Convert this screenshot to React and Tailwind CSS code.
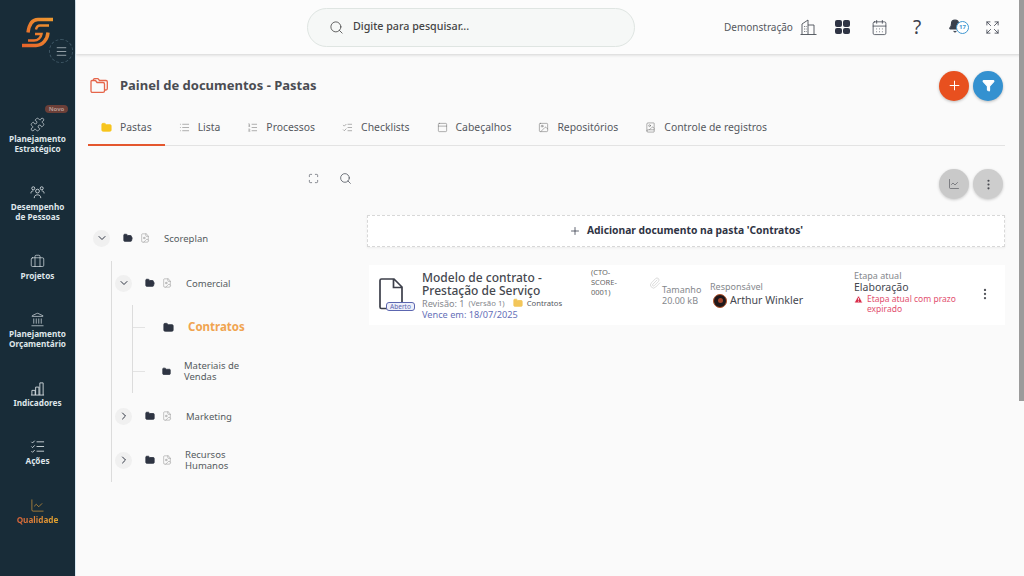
import {
  BookImage,
  Briefcase,
  ChartLine,
  ChevronDown,
  ChevronRight,
  EllipsisVertical,
  Expand,
  FileImage,
  Filter,
  Folder,
  FolderOpen,
  Image,
  Landmark,
  List,
  ListChecks,
  ListOrdered,
  Maximize,
  Menu,
  PanelTop,
  Paperclip,
  Plus,
  Puzzle,
  Search,
  TriangleAlert,
  CalendarDays,
  Bell,
} from "lucide-react";

function PeopleIcon({ size = 15 }) {
  return (
    <svg width={size} height={size} viewBox="0 0 16 16" fill="none" stroke="currentColor" strokeWidth="0.900">
      <circle cx="8" cy="6.500" r="2" />
      <path d="M4.500 14C4.500 11.500 6 10.500 8 10.500S11.500 11.500 11.500 14" />
      <circle cx="3.500" cy="3.500" r="1.600" />
      <circle cx="12.500" cy="3.500" r="1.600" />
      <path d="M1 9C1 7 2 6.300 3.500 6.300M15 9C15 7 14 6.300 12.500 6.300" />
    </svg>
  );
}

function BarsIcon({ size = 15 }) {
  return (
    <svg width={size} height={size} viewBox="0 0 16 16" fill="none" stroke="currentColor" strokeWidth="0.900">
      <path d="M1 15H15M2 15V10H5.500V15M6 15V6.500H9.500V15M10.500 15V2H14V15" />
    </svg>
  );
}

function ActionsIcon({ size = 15 }) {
  return (
    <svg width={size} height={size} viewBox="0 0 16 16" fill="none" stroke="currentColor" strokeWidth="0.900">
      <path d="M7 3H15M7 8H15M7 13H15M1.500 3L2.700 4.200L5 1.800M1.500 8L2.700 9.200L5 6.800M1.500 13L2.700 14.200L5 11.800" />
    </svg>
  );
}

const sideItems = [
  { icon: Puzzle, label: ["Planejamento", "Estratégico"], badge: true },
  { icon: PeopleIcon, label: ["Desempenho", "de Pessoas"] },
  { icon: Briefcase, label: ["Projetos"] },
  { icon: Landmark, label: ["Planejamento", "Orçamentário"] },
  { icon: BarsIcon, label: ["Indicadores"] },
  { icon: ActionsIcon, label: ["Ações"] },
  { icon: ChartLine, label: ["Qualidade"], active: true },
];

const tabs = [
  { label: "Pastas", icon: Folder, active: true },
  { label: "Lista", icon: List },
  { label: "Processos", icon: ListOrdered },
  { label: "Checklists", icon: ListChecks },
  { label: "Cabeçalhos", icon: PanelTop },
  { label: "Repositórios", icon: Image },
  { label: "Controle de registros", icon: BookImage },
];

function Logo() {
  return (
    <svg width="34" height="32" viewBox="0 0 34 32" fill="none">
      <defs>
        <linearGradient id="logo" x1="2" y1="30" x2="33" y2="3" gradientUnits="userSpaceOnUse">
          <stop offset="0" stopColor="#e8622a" />
          <stop offset="1" stopColor="#ee9a30" />
        </linearGradient>
      </defs>
      <g stroke="url(#logo)">
        <path d="M33 3.500H18C12 3.500 9 9 8 16.500" strokeWidth="3.400" />
        <path d="M29 9.500H20C17.500 9.500 16.500 11 16 13.500" strokeWidth="2.400" />
        <path d="M28 16.500C27.500 23 23 29.500 16 29.500H2" strokeWidth="3.400" />
        <path d="M15 18H21.500C21 21.500 18 24.500 14 24.500H8" strokeWidth="2.400" />
      </g>
    </svg>
  );
}

function SideItem({ item }) {
  const Icon = item.icon;
  return (
    <div className={`relative flex flex-col items-center ${item.active ? "text-[#d99a3a]" : "text-[#dfe6ea]"}`}>
      {item.badge && (
        <span className="absolute top-[-12px] left-[45px] h-[8px] w-[23px] rounded-full bg-[#6b3f38] text-center text-[6px] leading-[8px] font-bold text-[#b09a94]">
          Novo
        </span>
      )}
      <Icon size={15} strokeWidth={1.100} />
      <div className="mt-[2px] text-center text-[8.200px] leading-[9.500px] font-bold">
        {item.label.map((l) => (
          <div key={l} className={item.active ? "bg-gradient-to-r from-[#d8633a] to-[#e2a62e] bg-clip-text text-transparent" : ""}>
            {l}
          </div>
        ))}
      </div>
    </div>
  );
}

function Sidebar() {
  return (
    <aside className="relative flex h-full w-[76px] shrink-0 flex-col border-r border-[#d8e8f2] bg-[#182c38]">
      <div className="ml-[20px] mt-[16px] h-[32px]">
        <Logo />
      </div>
      <div className="absolute top-[39px] left-[49px] flex h-[24px] w-[24px] items-center justify-center rounded-full border border-dashed border-[#3d5563] text-[#d5dde1]">
        <Menu size={13} strokeWidth={1.200} />
      </div>
      <div className="mt-[69px] flex flex-col gap-[32.300px]">
        {sideItems.map((item) => (
          <SideItem key={item.label.join(" ")} item={item} />
        ))}
      </div>
    </aside>
  );
}

function BuildingIcon() {
  return (
    <svg width="17" height="16" viewBox="0 0 17 16" fill="none" stroke="#4a4f57" strokeWidth="0.900">
      <path d="M0.500 15.500H16.500M2 15.500V5L8 1V15.500M8 6H14V15.500M4 7.500H4.800M5.800 7.500H6.500M4 10H4.800M5.800 10H6.500M4 12.500H4.800M5.800 12.500H6.500" />
    </svg>
  );
}

function GridIcon() {
  return (
    <div className="grid h-[14px] w-[15px] grid-cols-2 gap-[1px]">
      <span className="rounded-[2px] bg-[#2f3444]" />
      <span className="rounded-[2px] bg-[#2f3444]" />
      <span className="rounded-[2px] bg-[#2f3444]" />
      <span className="rounded-[2px] bg-[#2f3444]" />
    </div>
  );
}

function FoldersIcon() {
  return (
    <svg width="18" height="15" viewBox="0 0 18 15" fill="none" stroke="#e5654a" strokeWidth="1.300" strokeLinejoin="round">
      <path d="M1 3.500C1 2.800 1.500 2.500 2 2.500H5.500L7 4.500H13C14 4.500 14.500 5 14.500 6V13C14.500 13.800 14 14.300 13 14.300H2.500C1.500 14.300 1 13.800 1 13Z" />
      <path d="M3.500 2.500V1.700C3.500 1 4 0.700 4.500 0.700H8L9.500 2.500H16C16.800 2.500 17.300 3 17.300 3.800V10.500C17.300 11.500 16.800 12 16 12H14.500" />
    </svg>
  );
}

function TopBar() {
  return (
    <header className="flex h-[54px] shrink-0 items-center bg-[#fcfcfc] pl-[231px] shadow-[0_1px_3px_rgba(0,0,0,0.16)]">
      <div className="flex h-[39px] w-[328px] items-center gap-[9px] rounded-full border border-[#dfe5e2] bg-[#f6f8f7] pl-[21px]">
        <Search size={15} strokeWidth={1.300} className="text-[#444]" />
        <span className="mb-[2px] text-[10.700px] font-medium text-[#444]">Digite para pesquisar...</span>
      </div>
      <span className="ml-[89px] text-[10px] text-[#55585e]">Demonstração</span>
      <div className="ml-[7px]">
        <BuildingIcon />
      </div>
      <div className="ml-[18px]">
        <GridIcon />
      </div>
      <CalendarDays size={17} strokeWidth={1.100} className="ml-[21px] text-[#3b404c]" />
      <span className="ml-[25px] w-[10px] text-[19px] leading-none text-[#3b404c]">?</span>
      <div className="relative ml-[25px] h-[16px] w-[22px]">
        <Bell size={14} fill="#3b404c" className="text-[#3b404c]" />
        <span className="absolute top-[2px] left-[8px] flex h-[13px] w-[13px] items-center justify-center rounded-full border border-[#3f97d1] bg-white text-[6px] font-bold text-[#3f97d1]">
          17
        </span>
      </div>
      <Expand size={15} strokeWidth={1.300} className="ml-[15px] text-[#3b404c]" />
    </header>
  );
}

function RoundButton({ className, children }) {
  return (
    <div className={`flex h-[30px] w-[30px] items-center justify-center rounded-full ${className}`}>
      {children}
    </div>
  );
}

function Tabs() {
  return (
    <div className="mt-[10px] flex h-[35px] border-b border-[#e3e3e3]">
      {tabs.map((t) => {
        const Icon = t.icon;
        return (
          <div
            key={t.label}
            className={`-mb-px flex h-[35px] items-center gap-[8px] border-b-2 pr-[13px] text-[10.400px] text-[#55585e] ${
              t.active ? "border-[#e4572e] pl-[13px]" : "border-transparent pl-[14px]"
            }`}
          >
            {t.active ? (
              <Icon size={11} fill="#f7c51e" className="text-[#f7c51e]" />
            ) : (
              <Icon size={11} strokeWidth={1.100} className="text-[#666]" />
            )}
            <span>{t.label}</span>
          </div>
        );
      })}
    </div>
  );
}

function TreeRow({ name, open, narrow, className = "" }) {
  const Fold = open ? FolderOpen : Folder;
  return (
    <div className={`flex h-[44px] items-center ${className}`}>
      <span className="flex h-[17px] w-[17px] items-center justify-center rounded-full bg-[#f0f0f0] text-[#2e3442]">
        {open ? <ChevronDown size={12} strokeWidth={2} /> : <ChevronRight size={12} strokeWidth={2} />}
      </span>
      <Fold size={10} fill="#2e3442" className="ml-[13px] text-[#2e3442]" />
      <FileImage size={10} strokeWidth={1} className="ml-[7px] text-[#777]" />
      <span className={`text-[9.500px] leading-[11px] text-[#555a60] ${narrow ? "ml-[13px] w-[60px]" : "ml-[14px]"}`}>
        {name}
      </span>
    </div>
  );
}

function LeafRow({ name, big }) {
  return (
    <div className="flex h-[44px] items-center">
      <span className="h-px w-[12px] bg-[#e3e3e3]" />
      <Folder size={big ? 11 : 9} fill="#2e3442" className={`text-[#2e3442] ${big ? "ml-[18px]" : "ml-[17px]"}`} />
      {big ? (
        <span className="ml-[14px] text-[11.500px] font-bold text-[#f0a450]">{name}</span>
      ) : (
        <span className="ml-[13px] w-[70px] text-[9.500px] leading-[11px] text-[#555a60]">{name}</span>
      )}
    </div>
  );
}

function Tree() {
  return (
    <div className="w-[279px] shrink-0">
      <div className="mt-[1px] flex h-[16px] items-center pl-[220px] text-[#3b404c]">
        <Maximize size={11} strokeWidth={1.300} />
        <Search size={13} strokeWidth={1.300} className="ml-[20px]" />
      </div>
      <div className="mt-[30px] pl-[5px]">
        <div className="h-[45px]">
          <TreeRow name="Scoreplan" open />
        </div>
        <div className="ml-[18px] border-l border-[#dcdcdc]">
          <div className="pl-[3px]">
            <TreeRow name="Comercial" open />
            <div className="ml-[17px] border-l border-[#dcdcdc]">
              <LeafRow name="Contratos" big />
              <LeafRow name="Materiais de Vendas" />
            </div>
            <TreeRow name="Marketing" className="mt-[1px]" />
            <TreeRow name="Recursos Humanos" narrow />
          </div>
        </div>
      </div>
    </div>
  );
}

function DocCard() {
  return (
    <div className="ml-[2px] mt-[18px] flex h-[60px] items-center bg-white">
      <div className="relative ml-[10px] h-[34px] w-[36px] shrink-0">
        <svg width="26" height="32" viewBox="0 0 26 32" fill="none" stroke="#3c3f4a" strokeWidth="1.700">
          <path d="M1 2.500C1 1.500 1.500 1 2.500 1H15L23 9V29C23 30 22.500 30.500 21.500 30.500H2.500C1.500 30.500 1 30 1 29ZM14.500 1V9.500H23" />
        </svg>
        <span className="absolute top-[24px] left-[7px] flex h-[9px] w-[29px] items-center justify-center rounded-[3px] border border-[#5c66b0] bg-[#eef0fa] text-[6.500px] text-[#5c66b0]">
          Aberto
        </span>
      </div>
      <div className="ml-[7px] w-[169px] shrink-0">
        <div className="text-[12px] leading-[13.500px] font-medium text-[#45484f]">
          Modelo de contrato -<br />Prestação de Serviço
        </div>
        <div className="flex items-center text-[9.100px] leading-[11px] text-[#85888d]">
          <span>Revisão: 1</span>
          <span className="ml-[4px] text-[7.800px]">(Versão 1)</span>
          <Folder size={10} fill="#f3c65a" className="ml-[8px] text-[#f3c65a]" />
          <span className="ml-[4px] text-[7.700px] text-[#55585e]">Contratos</span>
        </div>
        <div className="text-[9.200px] leading-[11px] text-[#6670b8]">Vence em: 18/07/2025</div>
      </div>
      <div className="w-[59px] shrink-0 self-start pt-[3px] text-[7.500px] leading-[9.800px] text-[#666]">
        (CTO-<br />SCORE-<br />0001)
      </div>
      <Paperclip size={12} strokeWidth={1} className="mb-[24px] ml-[-1px] shrink-0 text-[#b8b8b8]" />
      <div className="ml-px w-[48px] shrink-0 text-[9px] leading-[11px] text-[#85888d]">
        <div>Tamanho</div>
        <div>20.00 kB</div>
      </div>
      <div className="w-[144px] shrink-0">
        <div className="text-[9px] leading-[11px] text-[#85888d]">Responsável</div>
        <div className="mt-[1px] flex items-center gap-[3px] pl-[3px]">
          <span className="flex h-[14px] w-[14px] items-center justify-center rounded-full border border-[#b4532a] bg-[#20181a]">
            <span className="h-[5px] w-[5px] rounded-full bg-[#a5452c]" />
          </span>
          <span className="text-[10.600px] text-[#45484f]">Arthur Winkler</span>
        </div>
      </div>
      <div className="mb-[5px] w-[126px] shrink-0">
        <div className="text-[9px] leading-[10px] text-[#85888d]">Etapa atual</div>
        <div className="text-[10.500px] leading-[13px] text-[#45484f]">Elaboração</div>
        <div className="flex text-[8.500px] leading-[10px] text-[#e2506f]">
          <TriangleAlert size={9} fill="#d92d4a" className="mt-[1px] shrink-0 text-white" />
          <span className="ml-[4px] w-[100px]">Etapa atual com prazo expirado</span>
        </div>
      </div>
      <EllipsisVertical size={14} className="mb-[3px] ml-[-2px] text-[#55585e]" />
    </div>
  );
}

export default function App() {
  return (
    <div className="flex h-[576px] w-[1024px] overflow-hidden bg-[#fafafa] font-['Noto_Sans',sans-serif]">
      <Sidebar />
      <main className="relative flex min-w-0 flex-1 flex-col">
        <TopBar />
        <div className="pr-[19px] pl-[12px]">
          <div className="mt-[16px] flex h-[31px] items-center">
            <div className="ml-[2px]">
              <FoldersIcon />
            </div>
            <h1 className="ml-[12px] text-[13px] font-bold text-[#4a4c52]">Painel de documentos - Pastas</h1>
            <div className="mr-[2px] ml-auto flex gap-[4px]">
              <RoundButton className="bg-[#e8501f] text-white shadow-[0_1px_3px_rgba(0,0,0,0.25)]">
                <Plus size={15} strokeWidth={1.600} />
              </RoundButton>
              <RoundButton className="bg-[#3491d0] text-white shadow-[0_1px_3px_rgba(0,0,0,0.25)]">
                <Filter size={13} fill="white" />
              </RoundButton>
            </div>
          </div>
          <Tabs />
          <div className="mt-[23px] flex">
            <Tree />
            <div className="min-w-0 flex-1">
              <div className="mr-[2px] flex h-[30px] justify-end gap-[4px]">
                <RoundButton className="bg-[#c9c9c9] text-[#4a4c52] shadow-[0_1px_3px_rgba(0,0,0,0.2)]">
                  <ChartLine size={12} strokeWidth={1.200} />
                </RoundButton>
                <RoundButton className="bg-[#cdcdcd] text-[#4a4c52] shadow-[0_1px_3px_rgba(0,0,0,0.2)]">
                  <EllipsisVertical size={13} />
                </RoundButton>
              </div>
              <div className="mt-[16px] flex h-[32px] items-center justify-center gap-[6px] border border-dashed border-[#d8d8d8] bg-white text-[10.300px] font-bold text-[#2f3444] shadow-[0_1px_2px_rgba(0,0,0,0.06)]">
                <Plus size={12} strokeWidth={1.500} />
                <span>Adicionar documento na pasta 'Contratos'</span>
              </div>
              <DocCard />
            </div>
          </div>
        </div>
        <div className="absolute top-0 right-0 h-[401px] w-[5px] bg-[#9b9b9b]" />
      </main>
    </div>
  );
}
